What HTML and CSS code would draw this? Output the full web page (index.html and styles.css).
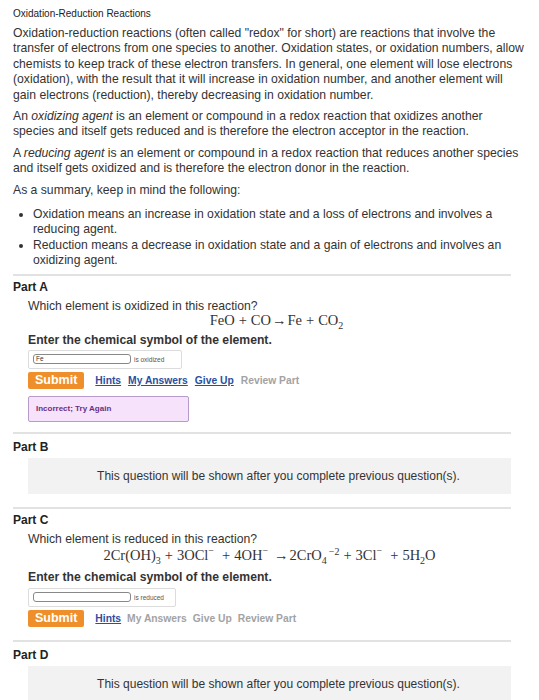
FILE: index.html
```html
<!DOCTYPE html>
<html>
<head>
<meta charset="utf-8">
<link rel="stylesheet" href="styles.css">
</head>
<body>
<div class="page">
  <div class="title">Oxidation-Reduction Reactions</div>
  <p class="para">Oxidation-reduction reactions (often called "redox" for short) are reactions that involve the transfer of electrons from one species to another. Oxidation states, or oxidation numbers, allow chemists to keep track of these electron transfers. In general, one element will lose electrons (oxidation), with the result that it will increase in oxidation number, and another element will gain electrons (reduction), thereby decreasing in oxidation number.</p>
  <p class="para">An <em>oxidizing agent</em> is an element or compound in a redox reaction that oxidizes another species and itself gets reduced and is therefore the electron acceptor in the reaction.</p>
  <p class="para">A <em>reducing agent</em> is an element or compound in a redox reaction that reduces another species and itself gets oxidized and is therefore the electron donor in the reaction.</p>
  <p class="para">As a summary, keep in mind the following:</p>
  <ul class="list">
    <li>Oxidation means an increase in oxidation state and a loss of electrons and involves a reducing agent.</li>
    <li>Reduction means a decrease in oxidation state and a gain of electrons and involves an oxidizing agent.</li>
  </ul>

  <section class="part">
    <div class="part-title">Part A</div>
    <div class="part-body">
      <div class="question">Which element is oxidized in this reaction?</div>
      <div class="eq eq-a">FeO<span class="op">+</span>CO<span class="arr">→</span>Fe<span class="op">+</span>CO<sub>2</sub></div>
      <div class="instr">Enter the chemical symbol of the element.</div>
      <div class="answer"><span class="field">Fe</span><span class="suffix">is oxidized</span></div>
      <div class="actions">
        <span class="submit">Submit</span>
        <span class="link">Hints</span>
        <span class="link">My Answers</span>
        <span class="link">Give Up</span>
        <span class="muted">Review Part</span>
      </div>
      <div class="feedback">Incorrect; Try Again</div>
    </div>
  </section>

  <section class="part part-locked">
    <div class="part-title">Part B</div>
    <div class="part-body">
      <div class="locked">This question will be shown after you complete previous question(s).</div>
    </div>
  </section>

  <section class="part part-c">
    <div class="part-title">Part C</div>
    <div class="part-body">
      <div class="question">Which element is reduced in this reaction?</div>
      <div class="eq eq-c">2Cr(OH)<sub>3</sub><span class="op">+</span>3OCl<sup>−</sup><span class="op op-wide">+</span>4OH<sup>−</sup><span class="arr arr-wide">→</span>2CrO<sub>4</sub><sup class="charge">−2</sup><span class="op">+</span>3Cl<sup>−</sup><span class="op op-wide">+</span>5H<sub>2</sub>O</div>
      <div class="instr">Enter the chemical symbol of the element.</div>
      <div class="answer answer-c"><span class="field"></span><span class="suffix">is reduced</span></div>
      <div class="actions actions-c">
        <span class="submit">Submit</span>
        <span class="link">Hints</span>
        <span class="muted">My Answers</span>
        <span class="muted">Give Up</span>
        <span class="muted">Review Part</span>
      </div>
    </div>
  </section>

  <section class="part part-locked">
    <div class="part-title">Part D</div>
    <div class="part-body">
      <div class="locked">This question will be shown after you complete previous question(s).</div>
    </div>
  </section>
</div>
</body>
</html>
```

FILE: styles.css
```css
html, body {
  margin: 0;
  padding: 0;
  background: #fff;
}
body {
  font-family: "Liberation Sans", Arial, sans-serif;
  color: #333;
}
.page {
  padding: 7px 14px 0 13px;
}
.title {
  font-size: 10px;
  color: #222;
  line-height: 14px;
  margin-bottom: 5px;
}
.para {
  font-size: 12.2px;
  line-height: 15.4px;
  margin: 0 0 6px 0;
  color: #333;
}
.list {
  margin: 9px 0 0 0;
  padding: 0 0 0 20px;
  font-size: 12.2px;
  line-height: 15.4px;
}
.list li {
  margin: 0;
}
.part {
  border-top: 2px solid #e2e2e2;
  margin: 5px 14px 0 0;
  padding-top: 4px;
}
.part-title {
  font-weight: bold;
  font-size: 12px;
  line-height: 15px;
  color: #222;
}
.part-body {
  padding-left: 15px;
  padding-bottom: 5px;
}
.part-locked {
  padding-top: 6px;
}
.part-locked .part-body {
  padding-bottom: 8px;
}
.part-c .part-body {
  padding-bottom: 8px;
}
.question {
  font-size: 12.2px;
  line-height: 14px;
  margin-top: 4px;
}
.eq {
  font-family: "Liberation Serif", "Times New Roman", serif;
  font-size: 14.5px;
  line-height: 15px;
  color: #333;
  text-align: center;
}
.eq sub, .eq sup {
  font-size: 10px;
  line-height: 0;
}
.eq sup.charge {
  vertical-align: 0.5em;
  margin-left: 2px;
}
.op {
  margin: 0 4px;
}
.op-wide {
  margin-left: 8px;
}
.arr {
  margin: 0 1px;
}
.arr-wide {
  margin-left: 6px;
}
.eq-a {
  padding-left: 14px;
}
.eq-c {
  margin-top: 2px;
}
.instr {
  font-weight: bold;
  font-size: 12.2px;
  line-height: 15px;
  margin-top: 5px;
  color: #333;
}
.eq-c + .instr {
  margin-top: 7px;
}
.answer {
  display: flex;
  align-items: center;
  width: 148px;
  height: 17px;
  border: 1px solid #dcdcdc;
  border-radius: 2px;
  margin-top: 2px;
  padding: 0 0 0 4px;
}
.answer-c {
  width: 142px;
  margin-top: 3px;
}
.field {
  display: block;
  width: 94px;
  height: 8px;
  border: 1px solid #888;
  border-radius: 3px;
  font-size: 6.5px;
  line-height: 8px;
  padding-left: 2px;
  color: #333;
}
.suffix {
  font-size: 6.5px;
  color: #555;
  margin-left: 3px;
}
.actions {
  display: flex;
  align-items: center;
  margin-top: 3px;
  font-size: 10.3px;
  font-weight: bold;
}
.actions-c .link,
.actions-c .muted {
  margin-right: 6px;
}
.submit {
  background: #ef8f2b;
  color: #fff;
  font-size: 12.5px;
  border-radius: 2px;
  padding: 0 7px;
  height: 17px;
  line-height: 17px;
  margin-right: 11px;
}
.link {
  color: #2a4fa0;
  text-decoration: underline;
  margin-right: 7px;
}
.muted {
  color: #a3a3a3;
  margin-right: 7px;
}
.feedback {
  margin-top: 7px;
  width: 152px;
  height: 24px;
  border: 1px solid #b79ccb;
  border-radius: 2px;
  background: #f6e2fb;
  color: #6a2f82;
  font-size: 8px;
  font-weight: bold;
  line-height: 24px;
  padding-left: 7px;
}
.locked {
  margin-top: 3px;
  background: #f2f2f2;
  height: 36px;
  line-height: 36px;
  text-align: center;
  padding-left: 18px;
  font-size: 12px;
  color: #333;
}
```
